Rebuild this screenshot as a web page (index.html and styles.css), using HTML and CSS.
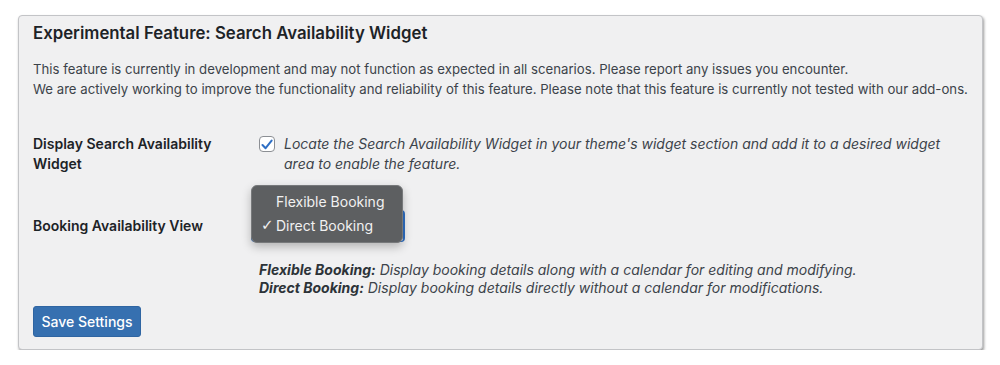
FILE: index.html
```html
<!DOCTYPE html>
<html lang="en">
<head>
<meta charset="utf-8">
<title>Search Availability Widget</title>
<link rel="stylesheet" href="styles.css">
</head>
<body>
<div class="card">
  <h2 class="title">Experimental Feature: Search Availability Widget</h2>
  <p class="notice">This feature is currently in development and may not function as expected in all scenarios. Please report any issues you encounter.<br>We are actively working to improve the functionality and reliability of this feature. Please note that this feature is currently not tested with our add-ons.</p>
  <div class="row row-check">
    <div class="label">Display Search Availability Widget</div>
    <div class="field check-field">
      <span class="checkbox">
        <svg width="12" height="11" viewBox="0 0 12 11"><path d="M1.5 6 L4.6 9.2 L10.6 1.6" fill="none" stroke="#2f6fc4" stroke-width="2" stroke-linecap="round" stroke-linejoin="round"/></svg>
      </span>
      <span class="hint">Locate the Search Availability Widget in your theme's widget section and add it to a desired widget area to enable the feature.</span>
    </div>
  </div>
  <div class="row row-select">
    <div class="label">Booking Availability View</div>
    <div class="field">
      <div class="select-wrap">
        <div class="select"></div>
        <ul class="menu">
          <li class="opt">Flexible Booking</li>
          <li class="opt selected"><span class="tick">✓</span>Direct Booking</li>
        </ul>
      </div>
    </div>
  </div>
  <div class="desc">
    <div><b>Flexible Booking:</b> Display booking details along with a calendar for editing and modifying.</div>
    <div><b>Direct Booking:</b> Display booking details directly without a calendar for modifications.</div>
  </div>
  <button class="save">Save Settings</button>
</div>
</body>
</html>
```

FILE: styles.css
```css
html, body {
  margin: 0;
  padding: 0;
  background: #ffffff;
}
body {
  padding: 15px 17px 0 18px;
  font-family: Inter, "Liberation Sans", sans-serif;
  color: #1d2327;
}
.card {
  box-sizing: border-box;
  width: 965px;
  height: 335px;
  background: #f0f0f1;
  border: 1px solid #c3c4c7;
  border-radius: 4px;
  box-shadow: 1px 2px 3px rgba(0,0,0,0.4);
  padding: 7px 14px 0 14px;
}
.title {
  margin: 0;
  font-size: 16.8px;
  font-weight: 600;
  line-height: 20px;
  color: #1d2327;
}
.notice {
  margin: 16px 0 0 0;
  font-size: 13.2px;
  line-height: 20px;
  color: #3c434a;
  white-space: nowrap;
}
.row {
  display: flex;
}
.row-check {
  margin-top: 35px;
}
.label {
  width: 226px;
  flex: none;
  font-size: 14px;
  font-weight: 600;
  line-height: 20px;
  color: #1d2327;
}
.row-check .label {
  width: 200px;
  margin-right: 26px;
}
.check-field {
  display: flex;
  align-items: flex-start;
}
.checkbox {
  box-sizing: border-box;
  width: 16px;
  height: 16px;
  flex: none;
  margin-top: 2px;
  margin-right: 9px;
  border: 1px solid #8c8f94;
  border-radius: 4px;
  background: #fff;
  display: flex;
  align-items: center;
  justify-content: center;
}
.hint {
  font-style: italic;
  font-size: 14px;
  line-height: 20px;
  color: #3c434a;
  width: 670px;
}
.row-select {
  margin-top: 36px;
  align-items: center;
}
.row-select .label {
  width: 218px;
}
.select-wrap {
  position: relative;
  width: 154px;
  height: 32px;
}
.select {
  box-sizing: border-box;
  width: 154px;
  height: 32px;
  border: 1px solid #2f6fc4;
  border-width: 1px 2px 1px 1px;
  border-radius: 4px;
  background: #fff;
}
.menu {
  position: absolute;
  left: 0;
  top: -25px;
  margin: 0;
  padding: 4px 0 5px;
  list-style: none;
  box-sizing: border-box;
  width: 152px;
  height: 58px;
  background: #5d5f61;
  border: 1px solid #77797b;
  border-radius: 6px;
  box-shadow: 0 4px 10px rgba(0,0,0,0.25);
  color: #f1f1f1;
  font-size: 14px;
  line-height: 24px;
}
.opt {
  padding-left: 24px;
  position: relative;
}
.tick {
  position: absolute;
  left: 9px;
  top: -1px;
  font-family: "DejaVu Sans", sans-serif;
  font-size: 15px;
}
.desc {
  margin-top: 19px;
  margin-left: 226px;
  font-style: italic;
  font-size: 14px;
  line-height: 18px;
  color: #3c434a;
}
.desc b {
  font-weight: 700;
  color: #2c3338;
}
.save {
  display: block;
  margin-top: 9px;
  box-sizing: border-box;
  width: 108px;
  height: 31px;
  background: #3670b0;
  border: 1px solid #2f65a2;
  border-radius: 3px;
  color: #fff;
  font-family: Inter, "Liberation Sans", sans-serif;
  font-size: 14px;
  font-weight: 500;
  padding: 0;
}
```
